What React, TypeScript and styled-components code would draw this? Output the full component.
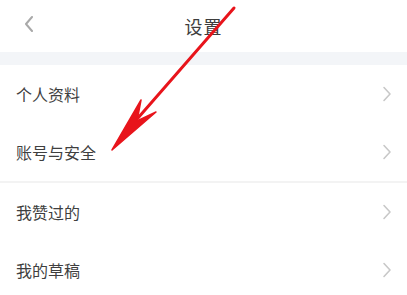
import * as React from 'react';
import styled, { createGlobalStyle } from 'styled-components';

const GlobalStyle = createGlobalStyle`
  html, body {
    margin: 0;
    padding: 0;
    background: #ffffff;
  }
  body {
    font-family: "Noto Sans CJK SC", "Noto Sans", sans-serif;
  }
`;

const items = [
  { section: 0, label: '个人资料' },
  { section: 0, label: '账号与安全' },
  { section: 1, label: '我赞过的' },
  { section: 1, label: '我的草稿' },
];

const Page = styled.div`
  position: relative;
  width: 407px;
  height: 295px;
  overflow: hidden;
  background: #ffffff;
`;

const Header = styled.header`
  position: relative;
  display: flex;
  align-items: center;
  justify-content: center;
  height: 52px;
`;

const Back = styled.div`
  position: absolute;
  left: 24px;
  top: 16px;
  display: flex;
`;

const Title = styled.h1`
  margin: -1px 0 0;
  font-size: 18px;
  font-weight: 400;
  color: #3d3d3d;
  letter-spacing: 1px;
`;

const Band = styled.div`
  height: 13px;
  background: #f3f5f8;
`;

const Section = styled.section<{ $divided?: boolean }>`
  border-top: ${(p) => (p.$divided ? '2px solid #f3f3f3' : 'none')};
`;

const Row = styled.div`
  display: flex;
  align-items: center;
  justify-content: space-between;
  height: 58px;
  padding: 0 15px 0 16px;
`;

const Label = styled.span`
  font-size: 16px;
  color: #3f3f3f;
`;

const Arrow = styled.svg`
  position: absolute;
  left: 0;
  top: 0;
  pointer-events: none;
`;

function Chevron({ left }: { left?: boolean }) {
  return (
    <svg width="10" height="16" viewBox="0 0 10 16" fill="none">
      <path
        d={left ? 'M8 1 L2 8 L8 15' : 'M2 1.5 L8 8 L2 14.5'}
        stroke={left ? '#a9a9a9' : '#c8c8c8'}
        strokeWidth={left ? 2 : 1.6}
        strokeLinecap="round"
        strokeLinejoin="round"
      />
    </svg>
  );
}

export default function App() {
  const sections = [0, 1].map((s) => items.filter((i) => i.section === s));

  return (
    <Page>
      <GlobalStyle />
      <Header>
        <Back>
          <Chevron left />
        </Back>
        <Title>设置</Title>
      </Header>
      <Band />
      {sections.map((rows, idx) => (
        <Section key={idx} $divided={idx > 0}>
          {rows.map((row) => (
            <Row key={row.label}>
              <Label>{row.label}</Label>
              <Chevron />
            </Row>
          ))}
        </Section>
      ))}
      <Arrow width="407" height="295" viewBox="0 0 407 295">
        <path d="M234 8 L124 134" stroke="#e8141b" strokeWidth="3" strokeLinecap="round" />
        <path
          d="M112 150 L141 100 L137 121 L156 112 Z"
          fill="#e8141b"
          stroke="#e8141b"
          strokeWidth="1.5"
          strokeLinejoin="round"
        />
      </Arrow>
    </Page>
  );
}
